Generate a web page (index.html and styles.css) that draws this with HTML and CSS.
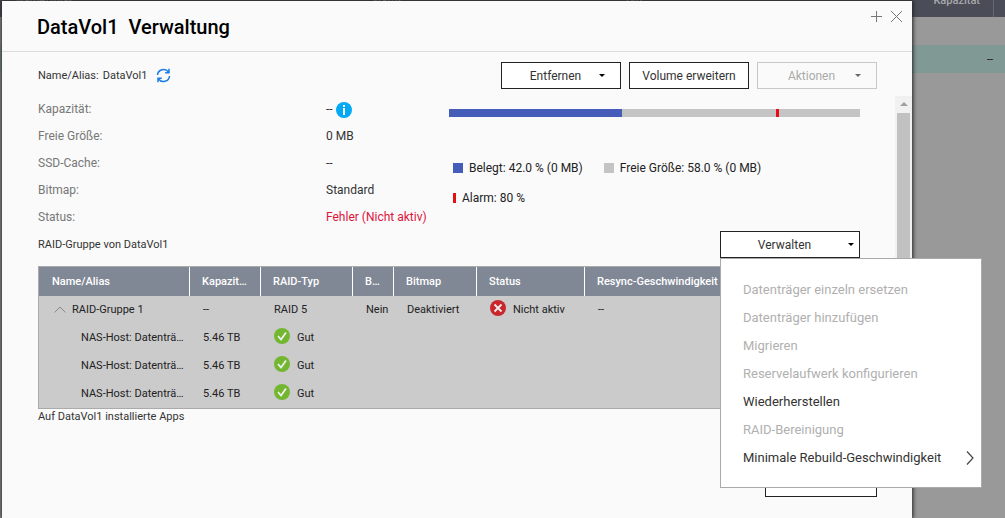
FILE: index.html
```html
<!DOCTYPE html>
<html lang="de">
<head>
<meta charset="utf-8">
<title>DataVol1 Verwaltung</title>
<link rel="stylesheet" href="styles.css">
</head>
<body>
<div class="backdrop">
  <div class="backdrop-head">
    <span>Name/Alias</span><span>Status</span><span>Typ</span><span class="capacity">Kapazität</span><span class="last"></span>
  </div>
  <div class="backdrop-row">--</div>
</div>

<main class="dialog">
  <header class="dialog-head">
    <h1>DataVol1&nbsp; Verwaltung</h1>
    <button class="icon-button" aria-label="Maximieren"><svg width="13" height="13" viewBox="0 0 13 13"><path d="M6.5 1v11M1 6.500h11"/></svg></button>
    <button class="icon-button" aria-label="Schließen"><svg width="13" height="13" viewBox="0 0 13 13"><path d="M1 1l11 11M12 1L1 12"/></svg></button>
  </header>

  <div class="toolbar">
    <div class="alias">
      <span>Name/Alias:</span><span class="alias-name">DataVol1</span>
      <button class="icon-button refresh" aria-label="Aktualisieren"><svg width="15" height="15" viewBox="0 0 15 15"><path d="M1.500 7A6 6 0 0 1 12.500 4.200M13 .8v3.900H9.200M13.500 8A6 6 0 0 1 2.500 10.800M2 14.200v-3.900h3.800"/></svg></button>
    </div>
    <button class="button drop"><span>Entfernen</span><i class="caret"></i></button>
    <button class="button">Volume erweitern</button>
    <button class="button drop" disabled><span>Aktionen</span><i class="caret"></i></button>
  </div>

  <div class="scroller">
    <div class="content">
      <section class="overview">
        <dl class="details">
          <dt>Kapazität:</dt><dd class="with-info">--<svg width="16" height="16" viewBox="0 0 16 16"><circle cx="8" cy="8" r="8" fill="#03a9f4"/><path d="M7 3h2v2H7zM7 6h2v7H7z" fill="#fff"/></svg></dd>
          <dt>Freie Größe:</dt><dd>0 MB</dd>
          <dt>SSD-Cache:</dt><dd>--</dd>
          <dt>Bitmap:</dt><dd>Standard</dd>
          <dt>Status:</dt><dd class="error">Fehler (Nicht aktiv)</dd>
        </dl>
        <div class="usage">
          <div class="bar"><div class="bar-used" style="width:42%"></div><div class="bar-alarm" style="left:80%"></div></div>
          <ul class="legend">
            <li><i class="swatch used"></i>Belegt: 42.0 % (0 MB)</li>
            <li><i class="swatch free"></i>Freie Größe: 58.0 % (0 MB)</li>
            <li><i class="swatch alarm"></i>Alarm: 80 %</li>
          </ul>
        </div>
      </section>

      <section class="group-head">
        <h2>RAID-Gruppe von DataVol1</h2>
        <div class="manage">
          <button class="button drop" aria-haspopup="menu" aria-expanded="true"><span>Verwalten</span><i class="caret"></i></button>
          <div class="menu" role="menu">
            <button role="menuitem" disabled>Datenträger einzeln ersetzen</button>
            <button role="menuitem" disabled>Datenträger hinzufügen</button>
            <button role="menuitem" disabled>Migrieren</button>
            <button role="menuitem" disabled>Reservelaufwerk konfigurieren</button>
            <button role="menuitem">Wiederherstellen</button>
            <button role="menuitem" disabled>RAID-Bereinigung</button>
            <button role="menuitem">Minimale Rebuild-Geschwindigkeit<svg width="8" height="14" viewBox="0 0 8 14"><path d="M1 .5l6 6.500-6 6.500"/></svg></button>
          </div>
        </div>
      </section>

      <table class="raid">
        <colgroup><col class="c1"><col class="c2"><col class="c3"><col class="c4"><col class="c5"><col class="c6"><col></colgroup>
        <thead>
          <tr><th>Name/Alias</th><th>Kapazität</th><th>RAID-Typ</th><th>B...</th><th>Bitmap</th><th>Status</th><th>Resync-Geschwindigkeit</th></tr>
        </thead>
        <tbody>
          <tr><td class="group"><svg width="12" height="7" viewBox="0 0 12 7"><path d="M.5 6.500L6 1l5.500 5.500"/></svg>RAID-Gruppe 1</td><td>--</td><td>RAID 5</td><td>Nein</td><td>Deaktiviert</td><td><svg class="state" width="16" height="16" viewBox="0 0 16 16"><circle cx="8" cy="8" r="8" fill="#c9272c"/><path d="M4.500 4.500l7 7M11.500 4.500l-7 7"/></svg>Nicht aktiv</td><td>--</td></tr>
          <tr><td class="disk">NAS-Host: Datenträger 1</td><td>5.46 TB</td><td><svg class="state" width="16" height="16" viewBox="0 0 16 16"><circle cx="8" cy="8" r="8" fill="#72b72f"/><path d="M4 8l3 3.500 5-7"/></svg>Gut</td><td></td><td></td><td></td><td></td></tr>
          <tr><td class="disk">NAS-Host: Datenträger 2</td><td>5.46 TB</td><td><svg class="state" width="16" height="16" viewBox="0 0 16 16"><circle cx="8" cy="8" r="8" fill="#72b72f"/><path d="M4 8l3 3.500 5-7"/></svg>Gut</td><td></td><td></td><td></td><td></td></tr>
          <tr><td class="disk">NAS-Host: Datenträger 3</td><td>5.46 TB</td><td><svg class="state" width="16" height="16" viewBox="0 0 16 16"><circle cx="8" cy="8" r="8" fill="#72b72f"/><path d="M4 8l3 3.500 5-7"/></svg>Gut</td><td></td><td></td><td></td><td></td></tr>
        </tbody>
      </table>
      <h2>Auf DataVol1 installierte Apps</h2>
    </div>
    <div class="scrollbar"><i class="scroll-up"></i><div class="thumb"></div></div>
  </div>

  <footer class="dialog-foot"><button class="button" aria-label="Schließen"></button></footer>
</main>
</body>
</html>
```
FILE: styles.css
```css
* { box-sizing: border-box; }
body {
  margin: 0;
  height: 100vh;
  overflow: hidden;
  background: #999;
  color: #333;
  font: 12px/16px Roboto, "Liberation Sans", sans-serif;
}
h1, h2, dl, dd, ul { margin: 0; padding: 0; }
button { font: inherit; color: inherit; margin: 0; padding: 0; border: 0; background: none; }

/* Dimmed volume list behind the dialog */
.backdrop-head {
  display: grid;
  grid-template-columns: 355px 253px 241px 1fr 12px;
  grid-template-rows: 17px;
  align-items: end;
  height: 17px;
  overflow: hidden;
  background: #4a4d58;
  color: #a8a8aa;
  font-size: 11px;
  font-weight: 500;
}
.backdrop-head span { padding: 0 0 8px 16px; }
.backdrop-head .capacity { padding-right: 13px; text-align: right; }
.backdrop-head .last { height: 17px; padding: 0; border-left: 1px solid #666974; }
.backdrop-row {
  height: 28px;
  margin-top: 28px;
  padding: 7px 12px;
  background: #819995;
  color: #111;
  font-size: 11px;
  text-align: right;
}

.dialog {
  position: absolute;
  inset: 1px 93px 0 2px;
  display: flex;
  flex-direction: column;
  background: #fafafa;
  box-shadow: 0 0 4px 1px #222;
}
.dialog-head {
  display: flex;
  align-items: center;
  gap: 7px;
  height: 51px;
  padding: 2px 9px 0 35px;
  border-bottom: 1px solid #dcdcdc;
}
h1 { flex: 1; color: #000; font-size: 20px; line-height: 24px; font-weight: 500; }
.icon-button { display: flex; }
.icon-button svg { fill: none; stroke: #777; }
.dialog-head .icon-button { align-self: flex-start; margin-top: 7px; }

.toolbar {
  display: flex;
  gap: 8px;
  padding: 10px 35px 7px 36px;
}
.alias { flex: 1; display: flex; align-items: center; gap: 4px; font-size: 11px; }
.refresh { margin-left: 5px; }
.refresh svg { stroke: #1a7ce8; stroke-width: 1.5; }

.button {
  width: 120px;
  height: 27px;
  border: 1px solid #222;
  background: #fff;
}
.button:disabled { border-color: #c8c8c8; background: #fafafa; color: #aaa; }
.drop { display: flex; align-items: center; padding-right: 15px; }
.drop span { flex: 1; padding-left: 10px; }
.caret { border: 3px solid transparent; border-top-color: #000; border-bottom: 0; }
.button:disabled .caret { border-top-color: #666; }

.scroller { flex: 1; display: flex; min-height: 0; }
.content { flex: 1; min-width: 0; padding: 0 35px 0 36px; }
.overview { display: grid; grid-template-columns: 411px 1fr; }
.details { display: grid; grid-template-columns: 288px 1fr; line-height: 27px; }
.details dt { color: #777; }
.details .error { color: #dc143c; }
.with-info { display: flex; align-items: center; gap: 3px; }
.usage { padding-top: 13px; }
.bar { position: relative; height: 8px; background: #c4c4c4; }
.bar-used { height: 100%; background: #455db8; }
.bar-alarm { position: absolute; top: 0; width: 3px; height: 8px; margin-left: -2px; background: #e60f14; }
.legend {
  display: flex;
  flex-wrap: wrap;
  gap: 14px 21px;
  padding: 43px 40px 0 4px;
  list-style: none;
}
.legend li { display: flex; align-items: center; gap: 6px; color: #222; }
.swatch { width: 10px; height: 10px; }
.used { background: #455db8; }
.free { background: #c4c4c4; }
.alarm { width: 3px; background: #e60f14; }

.group-head { display: flex; justify-content: space-between; align-items: center; }
h2 { font-size: 11px; line-height: 16px; font-weight: 400; }
.manage { position: relative; }
.manage .button { width: 140px; }
.manage .drop { padding-right: 5px; }
.manage .drop span { padding: 0; }
.menu {
  position: absolute;
  z-index: 1;
  top: 100%;
  left: 0;
  width: 262px;
  padding: 16px 7px 16px 22px;
  border: 1px solid #aaa;
  background: #fff;
  font-size: 13px;
}
.menu button {
  display: flex;
  align-items: center;
  justify-content: space-between;
  width: 100%;
  height: 28px;
  padding-top: 2px;
  color: #333;
}
.menu button:disabled { color: #b0b0b0; }
.menu svg { fill: none; stroke: #444; stroke-width: 1.2; }

.raid {
  width: 100%;
  margin-top: 8px;
  table-layout: fixed;
  border-collapse: separate;
  border-spacing: 0;
  border: 1px solid #aaa;
  background: #cbcbcb;
  color: #222;
  font-size: 11px;
}
.c1 { width: 150px; }
.c2 { width: 71px; }
.c3 { width: 92px; }
.c4 { width: 41px; }
.c5 { width: 83px; }
.c6 { width: 108px; }
.raid th, .raid td {
  height: 28px;
  padding: 0 4px 0 14px;
  overflow: hidden;
  text-align: left;
  text-overflow: ellipsis;
  white-space: nowrap;
}
.raid th {
  height: 29px;
  padding: 0 12px;
  border-left: 1px solid #fff;
  background: #808896;
  color: #fff;
  font-weight: 500;
}
.raid th:first-child { padding-left: 13px; border-left: 0; }
.raid th:last-child { padding-right: 0; }
.raid .group { padding-left: 15px; }
.raid .disk { padding-left: 42px; }
.raid svg { fill: none; stroke: #888; }
.group svg { margin-right: 6px; }
.raid .state { margin: -5px 7px 0 0; vertical-align: middle; }
.state path { stroke: #eee; stroke-width: 1.8; }
.state circle { stroke: none; }

.scrollbar { width: 17px; padding: 6px 2px 0; background: #f1f1f1; display: flex; flex-direction: column; align-items: center; gap: 7px; }
.scroll-up { border: 4px solid transparent; border-bottom-color: #a0a0a0; border-top: 0; }
.thumb { flex: 1; width: 13px; background: #c1c1c1; }

.dialog-foot { display: flex; justify-content: flex-end; padding: 10px 35px 21px; }
.dialog-foot .button { width: 112px; }
```
